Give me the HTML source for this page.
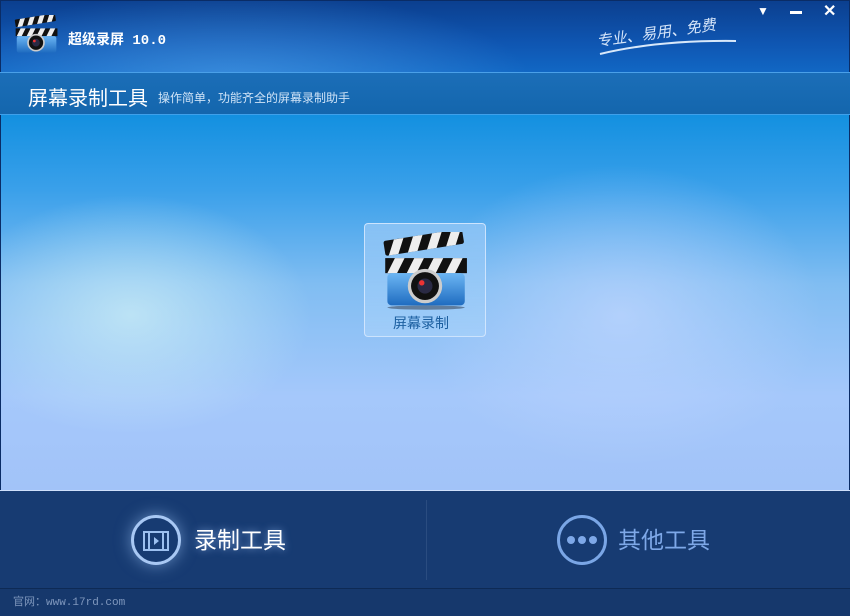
<!DOCTYPE html>
<html><head><meta charset="utf-8"><style>
*{margin:0;padding:0;box-sizing:border-box}
body{width:850px;height:616px;overflow:hidden;font-family:"Liberation Sans","Noto Sans CJK SC",sans-serif;position:relative;background:#0d2f5e}
.abs{position:absolute}
#title{left:0;top:0;width:850px;height:72px;background:radial-gradient(ellipse 300px 90px at 230px 80px,rgba(90,170,240,.55),transparent),linear-gradient(180deg,#0b3f8f 0%,#0f56b2 60%,#1167c4 100%);border:1px solid #0a2c66;border-bottom:none}
#sub{left:0;top:72px;width:850px;height:43px;background:linear-gradient(180deg,#1b6eb8,#1466ad);border-top:1px solid #4aa0e8;border-bottom:1px solid #3fa0ea}
#main{left:0;top:115px;width:850px;height:375px;background:radial-gradient(ellipse 180px 120px at 130px 200px,rgba(200,235,245,.8),transparent),radial-gradient(ellipse 200px 150px at 620px 200px,rgba(195,215,255,.7),transparent),linear-gradient(180deg,#1390e0 0%,#3aa0ea 20%,#80bdf2 45%,#a5c8fb 75%,#a2c3f8 100%);border-left:1px solid #0a2c66;border-right:1px solid #0a2c66}
#bot{left:0;top:490px;width:850px;height:98px;background:#173b72;border-top:1px solid #cfe0fb}
#foot{left:0;top:588px;width:850px;height:28px;background:#16386c;border-top:1px solid #0e2a55}
</style></head><body>
<div id="title" class="abs"></div>
<svg class="abs" style="left:14px;top:15px" width="44" height="40" viewBox="0 0 80 72">
<defs><linearGradient id="bd" x1="0" y1="0" x2="0" y2="1"><stop offset="0" stop-color="#6cb6f4"/><stop offset="1" stop-color="#1f6cc0"/></linearGradient></defs>
<g transform="rotate(-9 4 26)"><rect x="4" y="8" width="74" height="14" rx="2" fill="#111"/><path d="M14 8h9l-7 14h-9zM32 8h9l-7 14h-9zM50 8h9l-7 14h-9zM68 8h9l-7 14h-9z" fill="#eee"/></g>
<rect x="3" y="24" width="76" height="14" fill="#111"/><path d="M12 24h9l-7 14h-9zM30 24h9l-7 14h-9zM48 24h9l-7 14h-9zM66 24h9l-7 14h-9z" fill="#eee"/>
<rect x="5" y="38" width="72" height="30" rx="4" fill="url(#bd)"/>
<circle cx="40" cy="50" r="16" fill="#ccc"/><circle cx="40" cy="50" r="13" fill="#111"/><circle cx="40" cy="50" r="7" fill="#2a2a44"/><circle cx="37" cy="47" r="2.5" fill="#e33"/>
</svg>
<div class="abs" style="left:68px;top:29px;color:#fff;font-weight:bold;font-size:14px;font-family:'Liberation Mono','Noto Sans CJK SC',monospace">超级录屏 10.0</div>
<div class="abs" style="left:596px;top:22px;color:#d6e6fa;font-size:15px;font-style:italic;transform:rotate(-8deg)">专业、易用、免费</div>
<svg class="abs" style="left:598px;top:38px" width="140" height="20"><path d="M2 16 Q60 2 138 3" stroke="#d8e8fa" stroke-width="2" fill="none"/></svg>
<div class="abs" style="left:757px;top:6px;color:#fff;font-size:12px;line-height:10px">▼</div>
<div class="abs" style="left:790px;top:11px;width:12px;height:3px;background:#fff"></div>
<div class="abs" style="left:823px;top:1px;color:#fff;font-size:16px;font-weight:bold">✕</div>
<div id="sub" class="abs"></div>
<div class="abs" style="left:28px;top:82px;color:#fff;font-size:20px">屏幕录制工具</div>
<div class="abs" style="left:158px;top:89px;color:#cfe3f7;font-size:12px">操作简单，功能齐全的屏幕录制助手</div>
<div id="main" class="abs"></div>
<div class="abs" style="left:364px;top:223px;width:122px;height:114px;border:1px solid rgba(220,235,255,.8);border-radius:4px;background:linear-gradient(180deg,rgba(140,195,245,.9),rgba(165,208,250,.75))"></div>
<svg class="abs" style="left:382px;top:232px" width="86" height="78" viewBox="0 0 80 72">
<g transform="rotate(-9 4 26)"><rect x="4" y="8" width="74" height="14" rx="2" fill="#111"/><path d="M14 8h9l-7 14h-9zM32 8h9l-7 14h-9zM50 8h9l-7 14h-9zM68 8h9l-7 14h-9z" fill="#eee"/></g>
<rect x="3" y="24" width="76" height="14" fill="#111"/><path d="M12 24h9l-7 14h-9zM30 24h9l-7 14h-9zM48 24h9l-7 14h-9zM66 24h9l-7 14h-9z" fill="#eee"/>
<rect x="5" y="38" width="72" height="30" rx="4" fill="url(#bd)"/>
<ellipse cx="41" cy="70" rx="36" ry="2" fill="#3a4a60" opacity=".6"/>
<circle cx="40" cy="50" r="16" fill="#ccc"/><circle cx="40" cy="50" r="13" fill="#111"/><circle cx="40" cy="50" r="7" fill="#2a2a44"/><circle cx="37" cy="47" r="2.5" fill="#e33"/>
</svg>
<div class="abs" style="left:393px;top:313px;color:#1c5fa0;font-size:14px">屏幕录制</div>
<div id="bot" class="abs"></div>
<div class="abs" style="left:426px;top:500px;width:1px;height:80px;background:#2a4c80"></div>
<div class="abs" style="left:131px;top:515px;width:50px;height:50px;border-radius:50%;border:3px solid #a8c8f4;box-shadow:0 0 16px rgba(150,190,240,.6)"></div>
<svg class="abs" style="left:143px;top:530px" width="26" height="22"><rect x="1" y="2" width="24" height="18" fill="none" stroke="#9cc0f0" stroke-width="2"/><path d="M6 2v18M20 2v18" stroke="#9cc0f0" stroke-width="2"/><path d="M11 7l5 4-5 4z" fill="#9cc0f0"/></svg>
<div class="abs" style="left:194px;top:521px;color:#fff;font-size:23px;text-shadow:0 0 8px rgba(160,200,255,.7)">录制工具</div>
<div class="abs" style="left:557px;top:515px;width:50px;height:50px;border-radius:50%;border:3px solid #7aa6e6"></div>
<div class="abs" style="left:567px;top:536px;width:8px;height:8px;border-radius:50%;background:#7ea8e8"></div>
<div class="abs" style="left:578px;top:536px;width:8px;height:8px;border-radius:50%;background:#7ea8e8"></div>
<div class="abs" style="left:589px;top:536px;width:8px;height:8px;border-radius:50%;background:#7ea8e8"></div>
<div class="abs" style="left:618px;top:521px;color:#7ea8e8;font-size:23px">其他工具</div>
<div id="foot" class="abs"></div>
<div class="abs" style="left:13px;top:593px;color:#7f97bd;font-size:11px;font-family:'Liberation Mono','Noto Sans CJK SC',monospace">官网：www.17rd.com</div>
</body></html>
